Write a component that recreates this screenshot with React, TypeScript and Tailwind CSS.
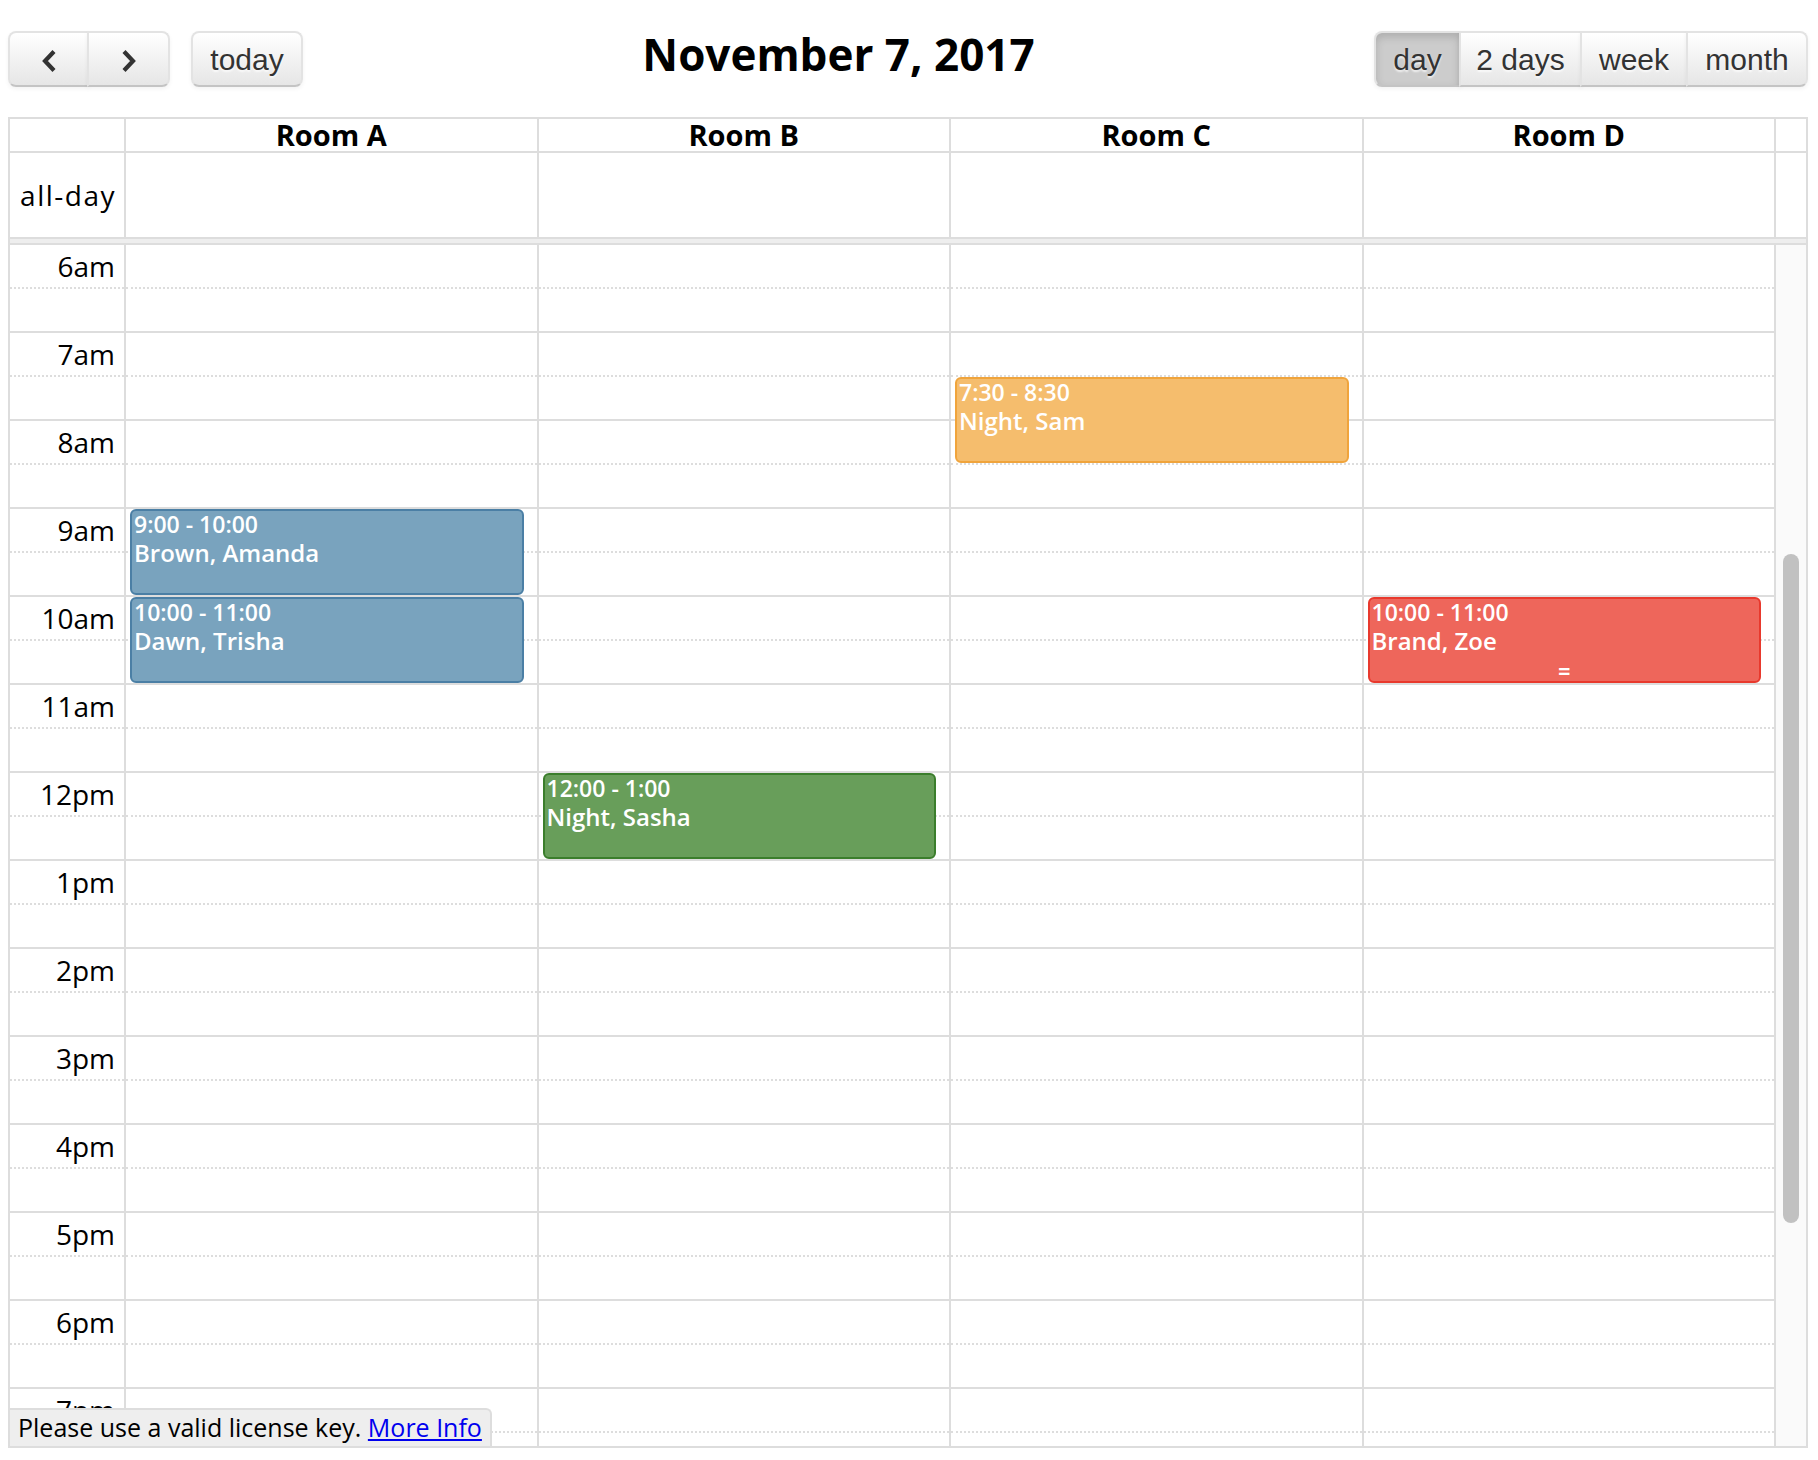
import React from "react";

type Ev = {
  col: number;
  start: number;
  time: string;
  title: string;
  color: "blue" | "green" | "orange" | "red";
  resizer?: boolean;
};

const EVENTS: Ev[] = [
  { col: 0, start: 9, time: "9:00 - 10:00", title: "Brown, Amanda", color: "blue" },
  { col: 0, start: 10, time: "10:00 - 11:00", title: "Dawn, Trisha", color: "blue" },
  { col: 1, start: 12, time: "12:00 - 1:00", title: "Night, Sasha", color: "green" },
  { col: 2, start: 7.5, time: "7:30 - 8:30", title: "Night, Sam", color: "orange" },
  { col: 3, start: 10, time: "10:00 - 11:00", title: "Brand, Zoe", color: "red", resizer: true },
];

const COLOR_CLASSES: Record<Ev["color"], string> = {
  blue: "bg-[#79a3be] border-[#4b7fa5]",
  green: "bg-[#689e5a] border-[#3b7e2c]",
  orange: "bg-[#f5bd6d] border-[#f0a43c]",
  red: "bg-[#ee665b] border-[#e8392d]",
};

const ROOMS = ["Room A", "Room B", "Room C", "Room D"];
const HOURS = [6, 7, 8, 9, 10, 11, 12, 13, 14, 15, 16, 17, 18, 19];
const HOUR_H = 88;

function hourLabel(h: number) {
  if (h === 12) return "12pm";
  if (h > 12) return `${h - 12}pm`;
  return `${h}am`;
}

function Chevron({ dir }: { dir: "left" | "right" }) {
  return (
    <svg width="18" height="24" viewBox="0 0 18 24" className="mt-[4px]">
      <polyline
        points={dir === "left" ? "14,2.5 5,12 14,21.5" : "4,2.5 13,12 4,21.5"}
        fill="none"
        stroke="#333"
        strokeWidth="4.2"
        strokeLinejoin="miter"
        strokeLinecap="butt"
      />
    </svg>
  );
}

const btnBase =
  "h-[56px] flex items-center justify-center border-2 border-[#e3e3e3] border-b-[#c4c4c4] text-[30px] text-[#333] font-['Liberation_Sans',Arial,sans-serif] [text-shadow:0_2px_2px_rgba(255,255,255,0.75)]";
const btnDefault =
  "bg-linear-to-b from-white to-[#e6e6e6] shadow-[inset_0_2px_0_rgba(255,255,255,0.2),0_2px_4px_rgba(0,0,0,0.05)]";
const btnActive =
  "bg-[#cccccc] border-[#bdbdbd] border-b-[#a8a8a8] shadow-[inset_0_4px_8px_rgba(0,0,0,0.15),0_2px_4px_rgba(0,0,0,0.05)]";

function Slots({ labels }: { labels?: boolean }) {
  return (
    <>
      {HOURS.map((h) => (
        <React.Fragment key={h}>
          <div className="h-[44px] shrink-0 border-b-2 border-dotted border-[#dddddd]">
            {labels && (
              <div className="text-right pr-[9px] pt-[2px] text-[28px] leading-[38px] text-black whitespace-nowrap">
                {hourLabel(h)}
              </div>
            )}
          </div>
          <div className="h-[44px] shrink-0 border-b-2 border-solid border-[#dddddd]" />
        </React.Fragment>
      ))}
    </>
  );
}

function EventBox({ ev }: { ev: Ev }) {
  return (
    <div
      className={`absolute left-[4px] right-[13px] h-[86px] border-2 rounded-[6px] text-white overflow-hidden ${COLOR_CLASSES[ev.color]}`}
      style={{ top: (ev.start - 6) * HOUR_H }}
    >
      <div className="pl-[2px] text-[23px] leading-[26px] font-semibold whitespace-nowrap">{ev.time}</div>
      <div className="pl-[2px] text-[24px] leading-[31px] font-semibold whitespace-nowrap">{ev.title}</div>
      {ev.resizer && (
        <div className="absolute left-0 right-0 bottom-[1px] h-[18px] leading-[18px] text-center text-[20px] font-bold font-['DejaVu_Sans_Mono',monospace]">
          =
        </div>
      )}
    </div>
  );
}

export default function App() {
  return (
    <div className="w-[1818px] h-[1460px] overflow-hidden bg-white pt-[31px] pl-[8px] pr-[10px] font-['Open_Sans','DejaVu_Sans',sans-serif] text-black">
      {/* Toolbar */}
      <div className="flex items-start h-[56px] mb-[30px]">
        <div className="flex">
          <div className="flex">
            <button className={`${btnBase} ${btnDefault} w-[81px] rounded-l-[8px]`}>
              <Chevron dir="left" />
            </button>
            <button className={`${btnBase} ${btnDefault} w-[83px] -ml-[2px] rounded-r-[8px]`}>
              <Chevron dir="right" />
            </button>
          </div>
          <button className={`${btnBase} ${btnDefault} w-[112px] ml-[21px] rounded-[8px]`}>today</button>
        </div>
        <div className="flex-1 text-center">
          <h2 className="text-[44px] leading-[46px] font-bold text-black">November 7, 2017</h2>
        </div>
        <div className="flex">
          <button className={`${btnBase} ${btnActive} w-[87px] rounded-l-[8px]`}>day</button>
          <button className={`${btnBase} ${btnDefault} w-[123px] -ml-[2px]`}>2 days</button>
          <button className={`${btnBase} ${btnDefault} w-[108px] -ml-[2px]`}>week</button>
          <button className={`${btnBase} ${btnDefault} w-[122px] -ml-[2px] rounded-r-[8px]`}>month</button>
        </div>
      </div>

      {/* Calendar table */}
      <div className="relative border-2 border-[#dddddd]">
        {/* Header */}
        <div className="flex h-[34px] border-b-2 border-[#dddddd]">
          <div className="w-[116px] shrink-0 border-r-2 border-[#dddddd]" />
          {ROOMS.map((r) => (
            <div
              key={r}
              className="flex-1 min-w-0 border-r-2 border-[#dddddd] text-center font-bold text-[29px] leading-[32px] text-black"
            >
              {r}
            </div>
          ))}
          <div className="w-[30px] shrink-0" />
        </div>

        {/* All-day */}
        <div className="flex h-[84px]">
          <div className="w-[116px] shrink-0 border-r-2 border-[#dddddd] flex items-center justify-end pr-[8px] text-[28px] tracking-[1.5px] text-black">
            all-day
          </div>
          {ROOMS.map((r) => (
            <div key={r} className="flex-1 min-w-0 border-r-2 border-[#dddddd]" />
          ))}
          <div className="w-[30px] shrink-0" />
        </div>
        <div className="h-[8px] border-y-2 border-[#dddddd] bg-[#eeeeee]" />

        {/* Time grid */}
        <div className="flex h-[1201px] overflow-hidden">
          <div className="w-[116px] shrink-0 border-r-2 border-[#dddddd] flex flex-col">
            <Slots labels />
          </div>
          {ROOMS.map((r, i) => (
            <div key={r} className="relative flex-1 min-w-0 border-r-2 border-[#dddddd] flex flex-col">
              <Slots />
              {EVENTS.filter((e) => e.col === i).map((e) => (
                <EventBox key={e.title} ev={e} />
              ))}
            </div>
          ))}
          <div className="w-[30px] shrink-0 bg-[#fafafa] flex justify-center">
            <div className="mt-[309px] w-[16px] h-[669px] rounded-full bg-[#c1c1c1]" />
          </div>
        </div>

        {/* License message */}
        <div className="absolute left-0 bottom-0 bg-[#eeeeee] border-t-2 border-r-2 border-[#dddddd] rounded-tr-[6px] px-[8px] pb-[2px] text-[25px] leading-[34px] text-black whitespace-nowrap">
          Please use a valid license key.{" "}
          <a href="#" className="text-[#0000ee] underline">
            More Info
          </a>
        </div>
      </div>
    </div>
  );
}
